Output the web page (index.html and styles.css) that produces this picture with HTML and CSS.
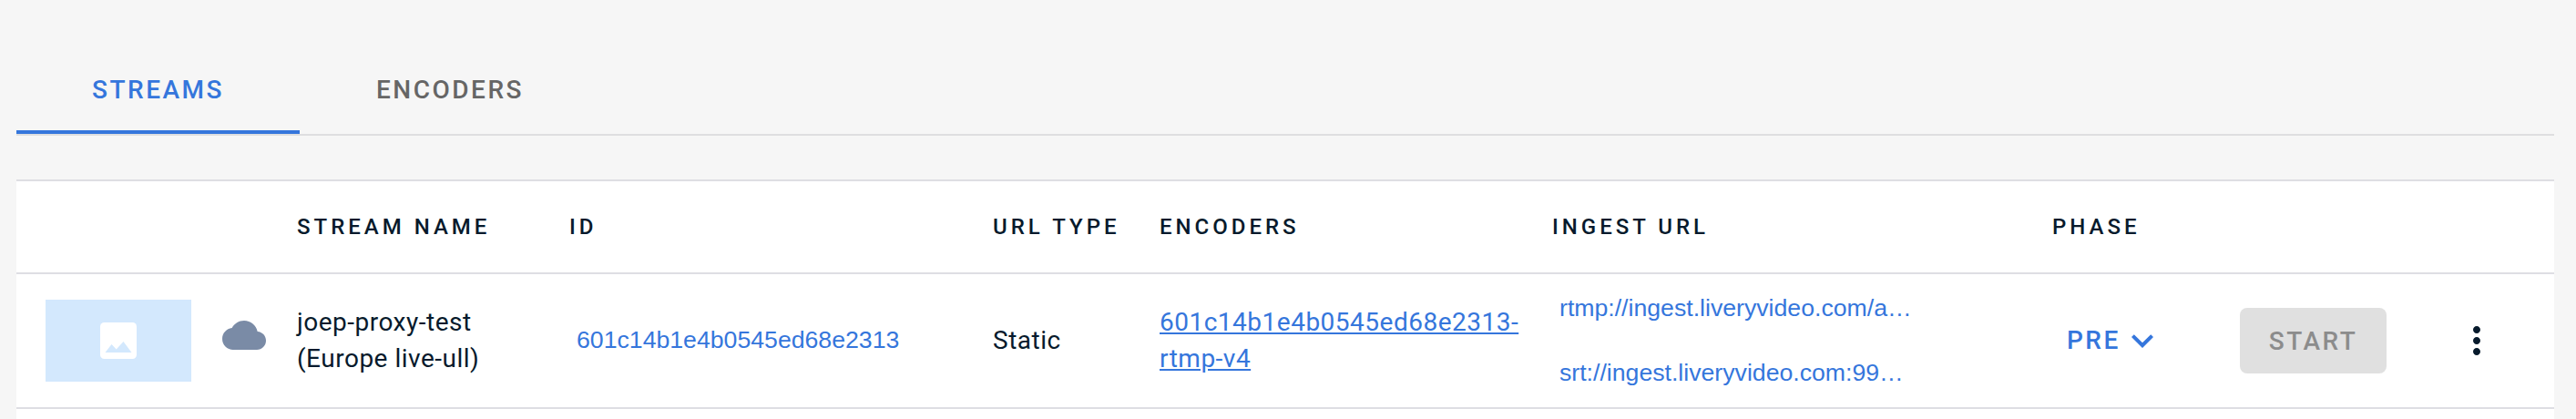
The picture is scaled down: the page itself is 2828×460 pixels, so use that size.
FILE: index.html
```html
<!DOCTYPE html>
<html lang="en">
<head>
<meta charset="utf-8">
<title>Streams</title>
<link rel="stylesheet" href="styles.css">
</head>
<body>
<main class="page">
  <nav class="tabs">
    <a class="tab tab-active">STREAMS</a>
    <a class="tab tab-wide">ENCODERS</a>
  </nav>
  <section class="table">
    <div class="row head">
      <div></div><div></div>
      <div>STREAM NAME</div>
      <div>ID</div>
      <div>URL TYPE</div>
      <div>ENCODERS</div>
      <div>INGEST URL</div>
      <div>PHASE</div>
      <div></div><div></div>
    </div>
    <div class="row item">
      <div class="thumb">
        <svg viewBox="0 0 40 40" width="40" height="40"><rect width="40" height="40" rx="4.500" fill="#fff"/><path fill="#d3e8fd" d="M5.500 33 12.500 24l5.200 5.600L25.500 21 34.500 33z"/></svg>
      </div>
      <div class="cloud"><svg viewBox="0 0 24 24" width="48" height="48"><path fill="#7a8ba6" d="M19.350 10.040C18.670 6.590 15.640 4 12 4 9.110 4 6.600 5.640 5.350 8.040 2.340 8.360 0 10.910 0 14c0 3.310 2.690 6 6 6h13c2.760 0 5-2.240 5-5 0-2.640-2.050-4.780-4.650-4.960z"/></svg></div>
      <div class="name">joep-proxy-test<br>(Europe live-ull)</div>
      <div class="copy">601c14b1e4b0545ed68e2313</div>
      <div>Static</div>
      <div><a class="link">601c14b1e4b0545ed68e2313-<br>rtmp-v4</a></div>
      <div class="urls"><span class="copy">rtmp://ingest.liveryvideo.com/a…</span><span class="copy">srt://ingest.liveryvideo.com:99…</span></div>
      <div class="phase">PRE<svg viewBox="0 0 24 24" width="48" height="48"><path fill="#3576dc" d="M7.410 8.590 12 13.170l4.590-4.580L18 10l-6 6-6-6z"/></svg></div>
      <div><button class="start" disabled>START</button></div>
      <div class="more"><svg viewBox="0 0 24 24" width="48" height="48"><path fill="#071a2c" d="M12 8c1.100 0 2-.9 2-2s-.9-2-2-2-2 .9-2 2 .9 2 2 2zm0 2c-1.100 0-2 .9-2 2s.9 2 2 2 2-.9 2-2-.9-2-2-2zm0 6c-1.100 0-2 .9-2 2s.9 2 2 2 2-.9 2-2-.9-2-2-2z"/></svg></div>
    </div>
  </section>
</main>
</body>
</html>
```
FILE: styles.css
```css
* { box-sizing: border-box; }
body {
  margin: 0;
  background: #f6f6f6;
  color: #071a2c;
  font-family: Roboto, sans-serif;
  font-size: 28px;
  line-height: 40px;
}
.page { height: 460px; padding: 49px 24px 0 18px; overflow: hidden; }
.tabs { display: flex; height: 100px; border-bottom: 2px solid #dedee0; }
.tab {
  display: flex;
  align-items: center;
  justify-content: center;
  width: 311px;
  padding-top: 6px;
  border-bottom: 4px solid transparent;
  color: #666;
  font-weight: 500;
  letter-spacing: 2.5px;
}
.tab-wide { width: 330px; }
.tab-active { color: #3576dc; border-color: #3576dc; }
.table { height: 263px; margin-top: 48px; background: #fff; border-top: 2px solid #dedee3; }
.row {
  display: grid;
  grid-template-columns: 194px 82px 299px 465px 183px 431px 549px 206px 236px 1fr;
  align-items: center;
  padding-left: 32px;
  border-bottom: 2px solid #dedee3;
}
.head { height: 102px; font-size: 24px; font-weight: 500; letter-spacing: 4px; }
.item { height: 148px; letter-spacing: 0.5px; }
.thumb { display: flex; align-items: center; justify-content: center; width: 160px; height: 90px; background: #d3e8fd; }
.cloud { padding-bottom: 12px; }
svg { display: block; flex: none; }
.copy { padding-left: 8px; color: #3576dc; font: 26.667px/40px "Liberation Sans", sans-serif; letter-spacing: 0; }
.item > .copy { padding-bottom: 2px; }
.link { color: #3576dc; text-decoration: underline; }
.urls { display: flex; flex-direction: column; gap: 31px; padding-bottom: 2px; }
.phase { display: flex; align-items: center; padding-left: 16px; color: #3576dc; font-weight: 500; letter-spacing: 2.5px; }
.start {
  display: block;
  width: 161px;
  height: 72px;
  padding: 0;
  border: 0;
  border-radius: 8px;
  background: #e0e0e0;
  color: #8c8c8c;
  font: 500 28px Roboto, sans-serif;
  letter-spacing: 2.5px;
}
```
